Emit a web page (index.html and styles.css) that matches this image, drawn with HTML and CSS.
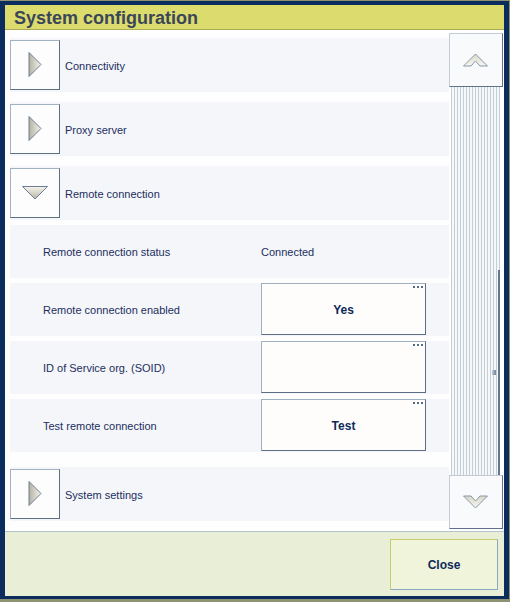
FILE: index.html
```html
<!DOCTYPE html>
<html>
<head>
<meta charset="utf-8">
<link rel="stylesheet" href="styles.css">
</head>
<body>
<div class="window">
  <div class="titlebar">System configuration</div>
  <div class="content">
    <div class="list">
      <div class="row group">
        <div class="expander"><svg width="14" height="26" viewBox="0 0 14 26"><defs><linearGradient id="gr" x1="0" y1="0" x2="1" y2="0"><stop offset="0" stop-color="#b3b19f"/><stop offset="1" stop-color="#f6f5ee"/></linearGradient></defs><polygon points="1,0.5 13,12.5 1,24.5" fill="url(#gr)" stroke="#6b7d94" stroke-width="1"/></svg></div>
        <span class="gtext">Connectivity</span>
      </div>
      <div class="row group">
        <div class="expander"><svg width="14" height="26" viewBox="0 0 14 26"><polygon points="1,0.5 13,12.5 1,24.5" fill="url(#gr)" stroke="#6b7d94" stroke-width="1"/></svg></div>
        <span class="gtext">Proxy server</span>
      </div>
      <div class="row group">
        <div class="expander"><svg width="26" height="14" viewBox="0 0 26 14"><defs><linearGradient id="gd" x1="0" y1="0" x2="0" y2="1"><stop offset="0" stop-color="#f6f5ee"/><stop offset="1" stop-color="#b7b5a3"/></linearGradient></defs><polygon points="0.5,0.5 25.5,0.5 13,13" fill="url(#gd)" stroke="#6b7d94" stroke-width="1"/></svg></div>
        <span class="gtext">Remote connection</span>
      </div>
      <div class="subrows">
        <div class="row sub">
          <span class="label">Remote connection status</span>
          <span class="value">Connected</span>
        </div>
        <div class="row sub">
          <span class="label">Remote connection enabled</span>
          <div class="field"><span class="dots"><i></i><i></i><i></i></span>Yes</div>
        </div>
        <div class="row sub">
          <span class="label">ID of Service org. (SOID)</span>
          <div class="field"><span class="dots"><i></i><i></i><i></i></span></div>
        </div>
        <div class="row sub">
          <span class="label">Test remote connection</span>
          <div class="field"><span class="dots"><i></i><i></i><i></i></span>Test</div>
        </div>
      </div>
      <div class="row group last">
        <div class="expander"><svg width="14" height="26" viewBox="0 0 14 26"><polygon points="1,0.5 13,12.5 1,24.5" fill="url(#gr)" stroke="#6b7d94" stroke-width="1"/></svg></div>
        <span class="gtext">System settings</span>
      </div>
    </div>
    <div class="scroller">
      <div class="sbtn"><svg width="26" height="14" viewBox="0 0 26 14"><defs><linearGradient id="gc" x1="0" y1="0" x2="0" y2="1"><stop offset="0" stop-color="#d9d7c7"/><stop offset="1" stop-color="#f7f7f2"/></linearGradient></defs><polygon points="0.5,13 12.5,1 24.5,13 17,13 12.5,8 8,13" fill="url(#gc)" stroke="#8798ab" stroke-width="1"/></svg></div>
      <div class="track"><div class="thumb"></div><div class="grip"></div></div>
      <div class="sbtn"><svg width="26" height="14" viewBox="0 0 26 14"><polygon points="0.5,1 8,1 12.5,6 17,1 24.5,1 12.5,13" fill="url(#gc)" stroke="#8798ab" stroke-width="1"/></svg></div>
    </div>
  </div>
  <div class="footer">
    <div class="close">Close</div>
  </div>
</div>
</body>
</html>
```
FILE: styles.css
```css
html, body {
  margin: 0;
  padding: 0;
}
body {
  background: #8d9270;
  width: 510px;
  height: 602px;
  overflow: hidden;
  font-family: "Liberation Sans", Arial, sans-serif;
}
.window {
  margin-top: 1px;
  width: 499px;
  border-style: solid;
  border-color: #0b2d5d;
  border-width: 4px 5px 3px 5px;
  background: #ffffff;
}
.titlebar {
  height: 23px;
  padding-top: 1px;
  background: #dcdc6e;
  border-bottom: 1px solid #a9a955;
  color: #3a4658;
  font-weight: bold;
  font-size: 18px;
  line-height: 25px;
  padding-left: 9px;
}
.content {
  height: 501px;
  display: flex;
  background: #fefefe;
}
.list {
  width: 439px;
  padding: 8px 0 0 5px;
  display: flex;
  flex-direction: column;
}
.row {
  background: #f4f6f9;
  display: flex;
  align-items: center;
  color: #1c2e60;
  font-size: 11px;
}
.group {
  height: 54px;
  margin-bottom: 10px;
}
.group.last {
  margin-top: 15px;
}
.expander {
  width: 48px;
  height: 48px;
  margin: 0;
  box-sizing: content-box;
  background: #fdfdfd;
  border: 1px solid;
  border-color: #a3b2c3 #5d6f87 #5d6f87 #a3b2c3;
  display: flex;
  align-items: center;
  justify-content: center;
}
.gtext {
  margin-left: 5px;
  padding-top: 2px;
}
.subrows {
  margin-top: -5px;
  display: flex;
  flex-direction: column;
  gap: 5px;
}
.sub {
  height: 53px;
  align-items: center;
}
.label {
  width: 218px;
  padding-left: 33px;
  padding-top: 1px;
}
.value {
  color: #1c2e60;
  padding-top: 1px;
}
.field {
  position: relative;
  align-self: flex-start;
  width: 163px;
  height: 50px;
  background: #fefdfc;
  border: 1px solid;
  border-color: #9fb0c2 #5b6e86 #5b6e86 #9fb0c2;
  display: flex;
  align-items: center;
  justify-content: center;
  font-weight: bold;
  font-size: 12px;
  color: #0d2a5a;
  padding-top: 1px;
  box-sizing: content-box;
}
.field {
  height: 49px;
}
.dots {
  position: absolute;
  top: 2px;
  right: 2px;
  display: flex;
  gap: 2px;
}
.dots i {
  display: block;
  width: 2px;
  height: 2px;
  background: #566b84;
}
.scroller {
  width: 54px;
  margin-top: 3px;
  display: flex;
  flex-direction: column;
}
.sbtn {
  width: 52px;
  height: 52px;
  background: #f9fafb;
  border: 1px solid;
  border-color: #c3ccd5 #5f7289 #5f7289 #c3ccd5;
  display: flex;
  align-items: center;
  justify-content: center;
}
.track {
  position: relative;
  height: 388px;
  background: #ffffff;
}
.track::before {
  content: "";
  position: absolute;
  left: 2px;
  top: 0;
  width: 49px;
  height: 100%;
  background: repeating-linear-gradient(to right, #c3cdd5 0 1px, #f6f8f9 1px 3px);
}
.thumb {
  position: absolute;
  left: 49px;
  top: 183px;
  width: 2px;
  height: 205px;
  background: #5f7790;
}
.grip {
  position: absolute;
  left: 43px;
  top: 283px;
  width: 4px;
  height: 5px;
  background: linear-gradient(to right, #c6ced6, #6a8098);
}
.footer {
  height: 64px;
  border-top: 1px solid #b7c3cc;
  background: #e9eed7;
  display: flex;
  justify-content: flex-end;
  align-items: flex-start;
  padding-right: 6px;
}
.close {
  margin-top: 7px;
  width: 106px;
  height: 48px;
  padding-top: 1px;
  background: #f0f4db;
  border: 1px solid;
  border-color: #c9cc6a #8ba6bf #8ba6bf #c9cc6a;
  display: flex;
  align-items: center;
  justify-content: center;
  font-weight: bold;
  font-size: 12px;
  color: #0d2a5a;
}
```
